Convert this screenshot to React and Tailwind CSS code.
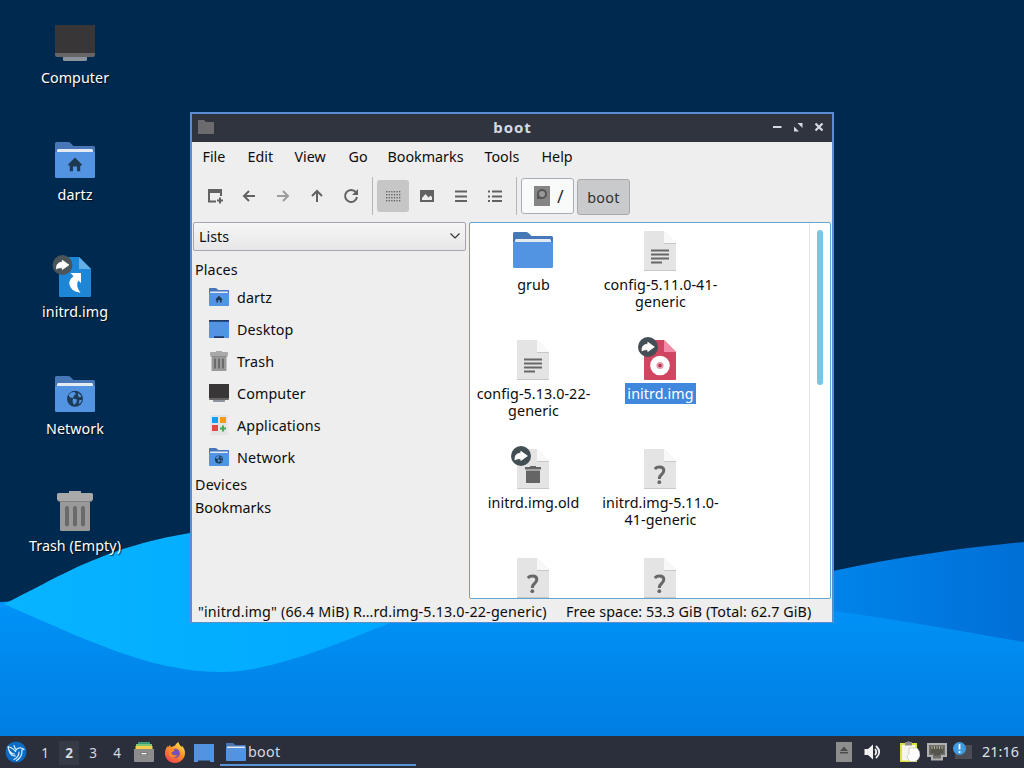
import React from 'react';
import clsx from 'clsx';

/* ---------- 48px icon set, shared by the desktop, sidebar and file view ---------- */

function Icon({ children, className = 'h-12 w-12', box = '0 0 48 48' }) {
  return <svg viewBox={box} className={clsx('shrink-0', className)}>{children}</svg>;
}

function FolderShape() {
  return (
    <>
      <path d="M4 7.5Q4 6 5.500 6H17Q18.500 6 19.500 7L22.500 10H42.500Q44 10 44 11.500V24H4Z" fill="#4877b8" />
      <path d="M6 15.500Q6 13 7 13H41Q42 13 42 15.500V20H6Z" fill="#e4eaf2" />
      <path d="M4 16H44V40.500Q44 42 42.500 42H5.500Q4 42 4 40.500Z" fill="#5294e2" />
    </>
  );
}

function HomeShape() {
  return (
    <>
      <FolderShape />
      <path d="M24 21.500L31 28.500L30 30L29.200 29.400V35.200H26V30.500H22V35.200H18.800V29.400L18 30L17 28.500Z" fill="#1e3a52" />
    </>
  );
}

function NetworkShape() {
  return (
    <>
      <FolderShape />
      <circle cx="24" cy="28.800" r="8" fill="#1d3c58" />
      <path d="M17.500 25L20 22.500L23.500 22L25 24L23 25.500L22 28L19 27.500ZM22 28.500L26 29.500L25.500 32.500L23 35L21.500 31.500ZM27 23L30.500 26L29 27.500L27 26ZM28.500 30L31 30L29.500 33L27.500 34Z" fill="#5294e2" />
    </>
  );
}

function ComputerShape() {
  return (
    <>
      <path d="M12 38H36V40.500Q36 42 34.500 42H13.500Q12 42 12 40.500Z" fill="#8b949c" />
      <path d="M4 7Q4 6 5 6H43Q44 6 44 7V36Q44 38 42 38H6Q4 38 4 36Z" fill="#666666" />
      <path d="M4 7Q4 6 5 6H43Q44 6 44 7V34H4Z" fill="#383636" />
    </>
  );
}

function TrashShape() {
  return (
    <>
      <path d="M9 13H39V42.500Q39 44 37.500 44H10.500Q9 44 9 42.500Z" fill="#999999" />
      <path d="M18 4H30V7H18Z" fill="#a9a9a9" />
      <path d="M6 7.500Q6 6 7.500 6H40.500Q42 6 42 7.500V12Q42 14 40 14H8Q6 14 6 12Z" fill="#a9a9a9" />
      <path d="M7 14H41V14.800H7Z" fill="#777" />
      <path d="M16 21V37.500M24 21V37.500M32 21V37.500" stroke="#6a6a6a" strokeWidth="4" strokeLinecap="round" />
    </>
  );
}

function DesktopShape() {
  return (
    <>
      <path d="M4 6H44V42H4Z" fill="#5294e2" />
      <path d="M4 6H44V9.500H4ZM14 38.500H34V42H14Z" fill="#1d3a66" />
    </>
  );
}

function ApplicationsShape() {
  return (
    <>
      <path d="M7 4H41V44H7Z" fill="#e3e3e3" />
      <path d="M10 8H22V20H10Z" fill="#12a0ee" />
      <path d="M26 8H38V20H26Z" fill="#f39c12" />
      <path d="M10 24H22V36H10Z" fill="#e04a3f" />
      <path d="M32 25V37M26 31H38" stroke="#43a85a" strokeWidth="4" />
    </>
  );
}

function Page({ fill = '#e4e4e4', fold = '#f8f8f8', edge = '#bcbcbc' }) {
  return (
    <>
      <path d="M8 5Q8 4 9 4H28L40 16V43Q40 44 39 44H9Q8 44 8 43Z" fill={fill} />
      <path d="M28 4L40 16H28Z" fill={fold} />
      {edge && <path d="M28 16H40V16.700H28Z" fill={edge} />}
      {edge && <path d="M8 43.300H40V44H8Z" fill={edge} />}
    </>
  );
}

function LinkEmblem({ cx = 12, cy = 12, bg = '#434f54' }) {
  return (
    <g transform={`translate(${cx - 10} ${cy - 10})`}>
      <circle cx="10" cy="10" r="10" fill={bg} />
      <path d="M4 14C3.800 9.500 5.500 7.300 9.800 7.300V5.300L16.400 9.900L9.800 14.500V12.700C7 12.700 5.400 12.700 4 14Z" fill="#fff" stroke="#fff" strokeWidth="0.800" strokeLinejoin="round" />
    </g>
  );
}

function TextFileShape() {
  return (
    <>
      <Page />
      <path d="M15 23.500H33M15 27.500H33M15 31.500H33M15 35.500H26" stroke="#686868" strokeWidth="1.800" />
    </>
  );
}

function UnknownFileShape() {
  return (
    <>
      <Page />
      <path d="M18.800 23.900Q20.500 22 23.600 22Q27.800 22 27.800 25.500Q27.800 27.500 25.500 29.500Q23.300 31.300 23.300 34" fill="none" stroke="#686868" strokeWidth="3" />
      <circle cx="23.300" cy="37.200" r="1.900" fill="#686868" />
    </>
  );
}

function OldFileShape() {
  return (
    <>
      <Page />
      <path d="M17 25.500H31V38H17ZM16 22H21V21H27V22H32V24.500H16Z" fill="#656565" />
      <LinkEmblem cx={12} cy={11} />
    </>
  );
}

function DiscImageShape() {
  return (
    <>
      <Page fill="#d0455f" fold="#f48ba6" edge={null} />
      <circle cx="24" cy="29.500" r="9.800" fill="#fff" />
      <circle cx="24" cy="29.500" r="3.600" fill="#e39aab" />
      <circle cx="24" cy="29.500" r="1.800" fill="#b93556" />
      <LinkEmblem cx={12} cy={11} />
    </>
  );
}

function ShortcutShape() {
  return (
    <>
      <Page fill="#1e86d6" fold="#63b0e8" edge={null} />
      <path d="M19.500 20H30V30L27.300 27.500Q24 33 29.500 39.800Q19.500 38.500 18.300 31Q18 26.500 22.500 23.200Z" fill="#fff" />
      <LinkEmblem cx={11.500} cy={12} bg="#4a5459" />
    </>
  );
}

/* ---------- data ---------- */

const DESKTOP_ICONS = [
  { label: 'Computer', Shape: ComputerShape },
  { label: 'dartz', Shape: HomeShape },
  { label: 'initrd.img', Shape: ShortcutShape },
  { label: 'Network', Shape: NetworkShape },
  { label: 'Trash (Empty)', Shape: TrashShape },
];

const MENU = [
  { label: 'File', width: 'w-[45px]' },
  { label: 'Edit', width: 'w-[47px]' },
  { label: 'View', width: 'w-[54px]' },
  { label: 'Go', width: 'w-[39px]' },
  { label: 'Bookmarks', width: 'w-[97px]' },
  { label: 'Tools', width: 'w-[57px]' },
  { label: 'Help', width: 'w-[40px]' },
];

const PLACES = [
  { label: 'dartz', Shape: HomeShape },
  { label: 'Desktop', Shape: DesktopShape },
  { label: 'Trash', Shape: TrashShape },
  { label: 'Computer', Shape: ComputerShape },
  { label: 'Applications', Shape: ApplicationsShape },
  { label: 'Network', Shape: NetworkShape },
];

const FILES = [
  { lines: ['grub'], Shape: FolderShape, folder: true },
  { lines: ['config-5.11.0-41-', 'generic'], Shape: TextFileShape },
  { lines: ['config-5.13.0-22-', 'generic'], Shape: TextFileShape },
  { lines: ['initrd.img'], Shape: DiscImageShape, selected: true },
  { lines: ['initrd.img.old'], Shape: OldFileShape },
  { lines: ['initrd.img-5.11.0-', '41-generic'], Shape: UnknownFileShape },
  { lines: [], Shape: UnknownFileShape },
  { lines: [], Shape: UnknownFileShape },
];

/* ---------- desktop ---------- */

function Wallpaper() {
  return (
    <svg viewBox="0 0 1024 768" className="absolute inset-0 h-full w-full">
      <defs>
        <linearGradient id="sea" x1="0" y1="600" x2="0" y2="740" gradientUnits="userSpaceOnUse">
          <stop offset="0" stopColor="#0093f8" />
          <stop offset="1" stopColor="#007de1" />
        </linearGradient>
        <linearGradient id="swell" x1="833" y1="0" x2="1024" y2="0" gradientUnits="userSpaceOnUse">
          <stop offset="0" stopColor="#0084ea" />
          <stop offset="1" stopColor="#006fd6" />
        </linearGradient>
        <linearGradient id="crest" x1="0" y1="600" x2="400" y2="600" gradientUnits="userSpaceOnUse">
          <stop offset="0" stopColor="#08b4ff" />
          <stop offset="1" stopColor="#00a8ff" />
        </linearGradient>
      </defs>
      <rect width="1024" height="768" fill="#00294f" />
      <path d="M600 620C700 600 760 585 833 571C900 557 960 548 1024 542V660H600Z" fill="url(#swell)" />
      <path d="M0 602C200 590 500 580 833 611C900 620 960 631 1024 642V768H0Z" fill="url(#sea)" />
      <path d="M4 604C60 577 100 548 190 533C340 515 420 560 500 580C420 610 360 636 320 650C280 664 250 672 220 672C150 672 80 637 4 604Z" fill="url(#crest)" />
    </svg>
  );
}

function DesktopIcon({ label, Shape }) {
  return (
    <div className="flex h-[117px] w-[120px] flex-col items-center">
      <Icon><Shape /></Icon>
      <span className="mt-0.5 whitespace-nowrap text-[14.3px] leading-[18px] tracking-[0.05px] text-white [text-shadow:1px_1px_1px_#000b]">
        {label}
      </span>
    </div>
  );
}

/* ---------- file manager window ---------- */

function TitleBar() {
  return (
    <div className="flex h-7 items-center bg-[#2f343f] pb-0.5 text-[#d3dae3]">
      <svg viewBox="0 0 16 16" className="ml-1.5 h-4 w-4">
        <path d="M0 1H6L8 3H16V15H0Z" fill="#6b6b6d" />
      </svg>
      <span className="flex-1 pl-[39px] text-center text-[15px] leading-6 font-bold tracking-[0.9px]">boot</span>
      <svg viewBox="0 0 56 14" className="mr-1 h-3.5 w-14 overflow-visible">
        <path d="M1 7H9.500" stroke="#d3dae3" strokeWidth="2" />
        <path d="M25.500 3H30.500V8ZM22 6.500V11.500H27Z" fill="#d3dae3" />
        <path d="M43.500 3.500L50.500 10.500M50.500 3.500L43.500 10.500" stroke="#d3dae3" strokeWidth="2.200" />
      </svg>
    </div>
  );
}

function ToolButton({ pressed, faded, children }) {
  return (
    <button
      type="button"
      className={clsx(
        'flex h-8 w-8 items-center justify-center rounded-[3px]',
        pressed && 'bg-[#c6c6c6]',
        faded ? 'text-[#9c9c9c]' : 'text-[#626262]',
      )}
    >
      <svg viewBox="0 0 16 16" className="h-4 w-4" fill="none" stroke="currentColor" strokeWidth="2">
        {children}
      </svg>
    </button>
  );
}

function Separator() {
  return <div className="mr-1 ml-[5px] h-[38px] w-px bg-[#b4b4b4]" />;
}

// Dots of the icon-grid button: six columns by four rows
const GRID_DOTS = [3, 6, 9, 12].flatMap((y) => [1, 3.6, 6.2, 8.8, 11.4, 14].map((x) => [x, y]));

function Toolbar() {
  return (
    <div className="flex h-[50px] items-center pb-0.5 pl-[7px]">
      <div className="flex gap-0.5">
        <ToolButton>
          <path d="M9 13.500H2V3H14V8" />
          <path d="M1 1H15V5H1Z" fill="currentColor" stroke="none" />
          <path d="M13 9.500V15.500M10 12.500H16" />
        </ToolButton>
        <ToolButton><path d="M14 8H3M8 3L3 8L8 13" /></ToolButton>
        <ToolButton faded><path d="M2 8H13M8 3L13 8L8 13" /></ToolButton>
        <ToolButton><path d="M8 14V3M3 8L8 3L13 8" /></ToolButton>
        <ToolButton>
          <path d="M13 4.500A6 6 0 1 0 14 9" />
          <path d="M15 1V7H9Z" fill="currentColor" stroke="none" />
        </ToolButton>
      </div>
      <Separator />
      <div className="flex gap-0.5">
        <ToolButton pressed>
          {GRID_DOTS.map(([x, y]) => (
            <rect key={`${x}-${y}`} x={x} y={y} width="1.300" height="1.400" fill="currentColor" stroke="none" />
          ))}
        </ToolButton>
        <ToolButton>
          <path fillRule="evenodd" d="M1 2H15V14H1ZM3 12H13V9L11.500 7.500L9.500 9.500L6.500 6L3 10Z" fill="currentColor" stroke="none" />
        </ToolButton>
        <ToolButton><path d="M2 3.500H14M2 8.500H14M2 13H14" /></ToolButton>
        <ToolButton>
          <path d="M1 3.500H3M5 3.500H15M1 8.500H3M5 8.500H15M1 13H3M5 13H15" />
        </ToolButton>
      </div>
      <Separator />
      <div className="flex gap-[3px] pt-px text-[14.3px] text-[#303030]">
        <button type="button" className="flex h-9 w-[53px] items-center rounded-[3px] border border-[#a9adb8] bg-[#f9fafa] pl-3">
          <svg viewBox="0 0 16 20" className="h-5 w-4">
            <rect width="16" height="20" fill="#858585" />
            <path d="M3 13V8A5 5 0 1 1 8 13Z" fill="#555" />
            <circle cx="8" cy="8" r="3" fill="#999" />
          </svg>
          <span className="ml-[7px] text-lg leading-5">/</span>
        </button>
        <button type="button" className="mt-px h-9 w-[53px] rounded-[3px] border border-[#a9a9ac] bg-[#c9cacb] pt-0.5 tracking-[0.3px]">boot</button>
      </div>
    </div>
  );
}

function Sidebar() {
  return (
    <div className="flex w-[274px] flex-col">
      <div className="ml-px flex h-[29px] items-center justify-between rounded-[2px] border border-[#a8a5b3] bg-linear-to-b from-[#f6f6f7] to-[#e7e7e8] pr-[5px] pl-[5px]">
        <span className="pt-0.5">Lists</span>
        <svg viewBox="0 0 10 6" className="h-1.5 w-2.5" fill="none" stroke="#333" strokeWidth="1.200">
          <path d="M0.500 0.500L5 5L9.500 0.500" />
        </svg>
      </div>
      <div className="mt-[7px] h-6 pl-[3px] leading-6 tracking-[0.1px]">Places</div>
      {PLACES.map(({ label, Shape }) => (
        <div key={label} className="flex h-8 items-center gap-2 pl-[17px]">
          <Icon box="4 4 40 40" className="mb-0.5 h-5 w-5"><Shape /></Icon>
          <span className="tracking-[0.12px]">{label}</span>
        </div>
      ))}
      <div className="h-[23px] pl-[3px] leading-[22px] tracking-[0.2px]">Devices</div>
      <div className="h-[23px] pl-[3px] leading-[22px]">Bookmarks</div>
    </div>
  );
}

function FileItem({ lines, Shape, selected, folder }) {
  return (
    <div className="flex h-[109px] w-[127px] flex-col items-center pt-[3px]">
      <Icon className={clsx('mr-0.5 h-12 w-12', !folder && 'mt-px -mb-px')}><Shape /></Icon>
      <div
        className={clsx(
          'text-center leading-[17px] tracking-[0.08px] whitespace-nowrap',
          selected ? 'bg-[#4088de] px-[2.5px] py-0.5 text-white' : 'mt-0.5',
        )}
      >
        {lines.map((line) => <div key={line}>{line}</div>)}
      </div>
    </div>
  );
}

function FileView() {
  return (
    <div className="ml-[3px] flex h-[377px] w-[362px] overflow-hidden rounded-[2px] border border-[#5fa8d3] bg-white">
      <div className="grid w-[339px] auto-rows-[109px] grid-cols-[127px_127px] content-start">
        {FILES.map((file, i) => <FileItem key={i} {...file} />)}
      </div>
      <div className="flex flex-1 border-l border-[#e6e6e6] pt-[7px] pl-[7px]">
        <div className="h-[155px] w-1.5 rounded-full bg-[#79c6e2]" />
      </div>
    </div>
  );
}

function FileManager() {
  return (
    <div className="absolute top-[112px] left-[190px] flex h-[511px] w-[644px] flex-col border-2 border-b border-[#5b8dd3] bg-[#eeeeee] text-[14.3px] text-[#0c0c0c]">
      <TitleBar />
      <div className="flex h-[30px] items-center pl-[10.5px]">
        {MENU.map(({ label, width }) => <span key={label} className={width}>{label}</span>)}
      </div>
      <Toolbar />
      <div className="flex h-[377px]">
        <Sidebar />
        <FileView />
      </div>
      <div className="flex flex-1 items-center pt-0.5 pl-1.5 whitespace-nowrap">
        <span className="w-[368px] tracking-[0.16px]">"initrd.img" (66.4 MiB) R…rd.img-5.13.0-22-generic)</span>
        <span className="tracking-[0.08px]">Free space: 53.3 GiB (Total: 62.7 GiB)</span>
      </div>
    </div>
  );
}

/* ---------- panel ---------- */

function Launcher() {
  return (
    <svg viewBox="0 0 22 22" className="h-[22px] w-[22px]">
      <circle cx="11" cy="11" r="10.500" fill="#0a6cc4" />
      <path d="M3 5.500C6 6.500 9 8 10.500 10.500C11 8 13.500 6.500 16.500 7L19 8.500L16.800 9C17.500 13 15.500 17 11.500 19.500M3 5.500C3.500 10 6 12.500 9.500 13M4 9.500C5 13 7 15 10.500 15M9 4.500C9.500 6.500 10.200 8 11.500 8.500M14 11C14 14 12 17 9 18.500" fill="none" stroke="#dceeff" strokeWidth="1.200" strokeLinecap="round" strokeLinejoin="round" />
    </svg>
  );
}

function Cabinet() {
  return (
    <svg viewBox="0 0 20 20" className="h-5 w-5">
      <path d="M4 0H16V3H4Z" fill="#3f9c78" />
      <path d="M2 2H18V5H2Z" fill="#7fc47a" />
      <path d="M1.500 4H18.500V8H1.500Z" fill="#f2cf4b" />
      <path d="M0 7H20V19Q20 20 19 20H1Q0 20 0 19Z" fill="#8c8c8c" />
      <path d="M6.500 10.500H13.500V13H6.500Z" fill="#6d6d6d" />
      <path d="M7.500 11H12.500V12.300H7.500Z" fill="#fff" />
    </svg>
  );
}

function Firefox() {
  return (
    <svg viewBox="0 0 20 21" className="h-[21px] w-5">
      <defs>
        <linearGradient id="fox" x1="16" y1="1" x2="4" y2="20" gradientUnits="userSpaceOnUse">
          <stop offset="0" stopColor="#ffe047" />
          <stop offset="0.450" stopColor="#ff8f28" />
          <stop offset="1" stopColor="#f0464f" />
        </linearGradient>
      </defs>
      <path d="M10 3.500C11 2 12 1 13.500 0C13.800 2.500 15.500 3.500 16.500 5L17 3.800C19 6 20 8.500 20 11C20 16.500 15.500 21 10 21C4.500 21 0 16.800 0 11.500C0 8.500 1 6 2.500 4L3 5.500L4.500 3L6 5Q8 4.500 10 3.500Z" fill="url(#fox)" />
      <circle cx="10.300" cy="11.300" r="4.600" fill="#7650b4" />
      <path d="M5 7C7 6.500 8.500 7 9.800 8.200C8.800 9.700 7.500 9.500 6.500 10.500C6.500 13 9 14 12 12.800C11 16 7 16.500 4.500 13.500C3.500 11.500 3.500 9 5 7Z" fill="#ff8a26" />
    </svg>
  );
}

function ShowDesktop() {
  return (
    <svg viewBox="0 0 20 18" className="mt-px h-[18px] w-5">
      <path d="M0 0H20V18H16V16.500H4V18H0Z" fill="#5294e2" />
    </svg>
  );
}

function Tray() {
  return (
    <div className="flex items-center">
      <svg viewBox="0 0 16 20" className="h-5 w-4">
        <rect width="16" height="20" fill="#8e8e8e" />
        <path d="M8 4.500L12 9H4ZM4 10H12V11.500H4Z" fill="#4c4c4c" />
      </svg>
      <svg viewBox="0 0 18 16" className="ml-3 h-4 w-[18px]">
        <path d="M0.500 5H4L9 0.500V15.500L4 11H0.500Z" fill="#f2f2f2" />
        <path d="M11 5Q13.500 8 11 11M12 2Q18.500 8 12 14" fill="none" stroke="#f2f2f2" strokeWidth="1.800" />
      </svg>
      <svg viewBox="0 0 20 22" className="ml-[18px] h-[22px] w-5">
        <path d="M0 2H17V21H0Z" fill="#dfe23c" />
        <path d="M2 4H15.500V19.500H2Z" fill="#f6f6ee" />
        <path d="M5 1H7L8.500 0L10 1H12V4.500H5Z" fill="#8f8f8a" />
        <path d="M9 7H17Q20 10 20 14Q19 19 15 20.500H10L7 16Q7.500 14 9 13Z" fill="#ffffff" stroke="#bdbdb5" strokeWidth="0.700" />
      </svg>
      <svg viewBox="0 0 20 18" className="ml-[7px] h-[18px] w-5">
        <path d="M1 1H19V13H15V16.500H5V13H1Z" fill="#6e6e6c" stroke="#b0b0b0" strokeWidth="2" />
        <path d="M3.500 3.500H16.500V10.500H13V12.500H7V10.500H3.500Z" fill="#55554d" />
        <path d="M5 3V6M7.500 3V6M10 3V6M12.500 3V6M15 3V6" stroke="#c5c3a5" strokeWidth="0.800" />
      </svg>
      <svg viewBox="0 0 20 18" className="mb-0.5 ml-1.5 h-[18px] w-5">
        <path d="M5 3H19V17H2V12Z" fill="#4b4d52" />
        <circle cx="6.500" cy="6.500" r="6.500" fill="#3f9be0" />
        <path d="M6.500 2V7.500M6.500 9V11" stroke="#fff" strokeWidth="1.800" />
      </svg>
      <span className="ml-[9px] w-[42px] text-[14.3px] tracking-[0.1px] text-[#dfe3ea]">21:16</span>
    </div>
  );
}

function Panel() {
  return (
    <div className="flex h-8 items-center bg-[#2b2f3b] pl-[5px] text-[14.3px] text-[#d6dae2]">
      <Launcher />
      <div className="ml-[6px] flex pt-0.5 text-center text-[13.5px]">
        {[1, 2, 3, 4].map((n) => (
          <span key={n} className={clsx('mx-0.5 w-5 leading-6', n === 2 && 'bg-[#363a45] font-bold')}>{n}</span>
        ))}
      </div>
      <div className="ml-[5px] flex items-center">
        <Cabinet />
        <div className="mr-[9px] ml-[11px]"><Firefox /></div>
        <ShowDesktop />
      </div>
      <div className="ml-1.5 box-content flex h-6 w-[190px] items-center self-start border-b-2 border-[#5a94d8] pt-1 pl-1.5">
        <Icon box="4 4 40 40" className="h-5 w-5"><FolderShape /></Icon>
        <span className="ml-0.5 tracking-[0.3px]">boot</span>
      </div>
      <div className="ml-auto"><Tray /></div>
    </div>
  );
}

export default function App() {
  return (
    <div className="relative flex h-[768px] w-[1024px] flex-col overflow-hidden bg-[#00294f] font-['Noto_Sans','Open_Sans',sans-serif]">
      <Wallpaper />
      <div className="relative flex-1 pt-[19px] pl-[15px]">
        {DESKTOP_ICONS.map((item) => <DesktopIcon key={item.label} {...item} />)}
      </div>
      <FileManager />
      <div className="relative"><Panel /></div>
    </div>
  );
}
